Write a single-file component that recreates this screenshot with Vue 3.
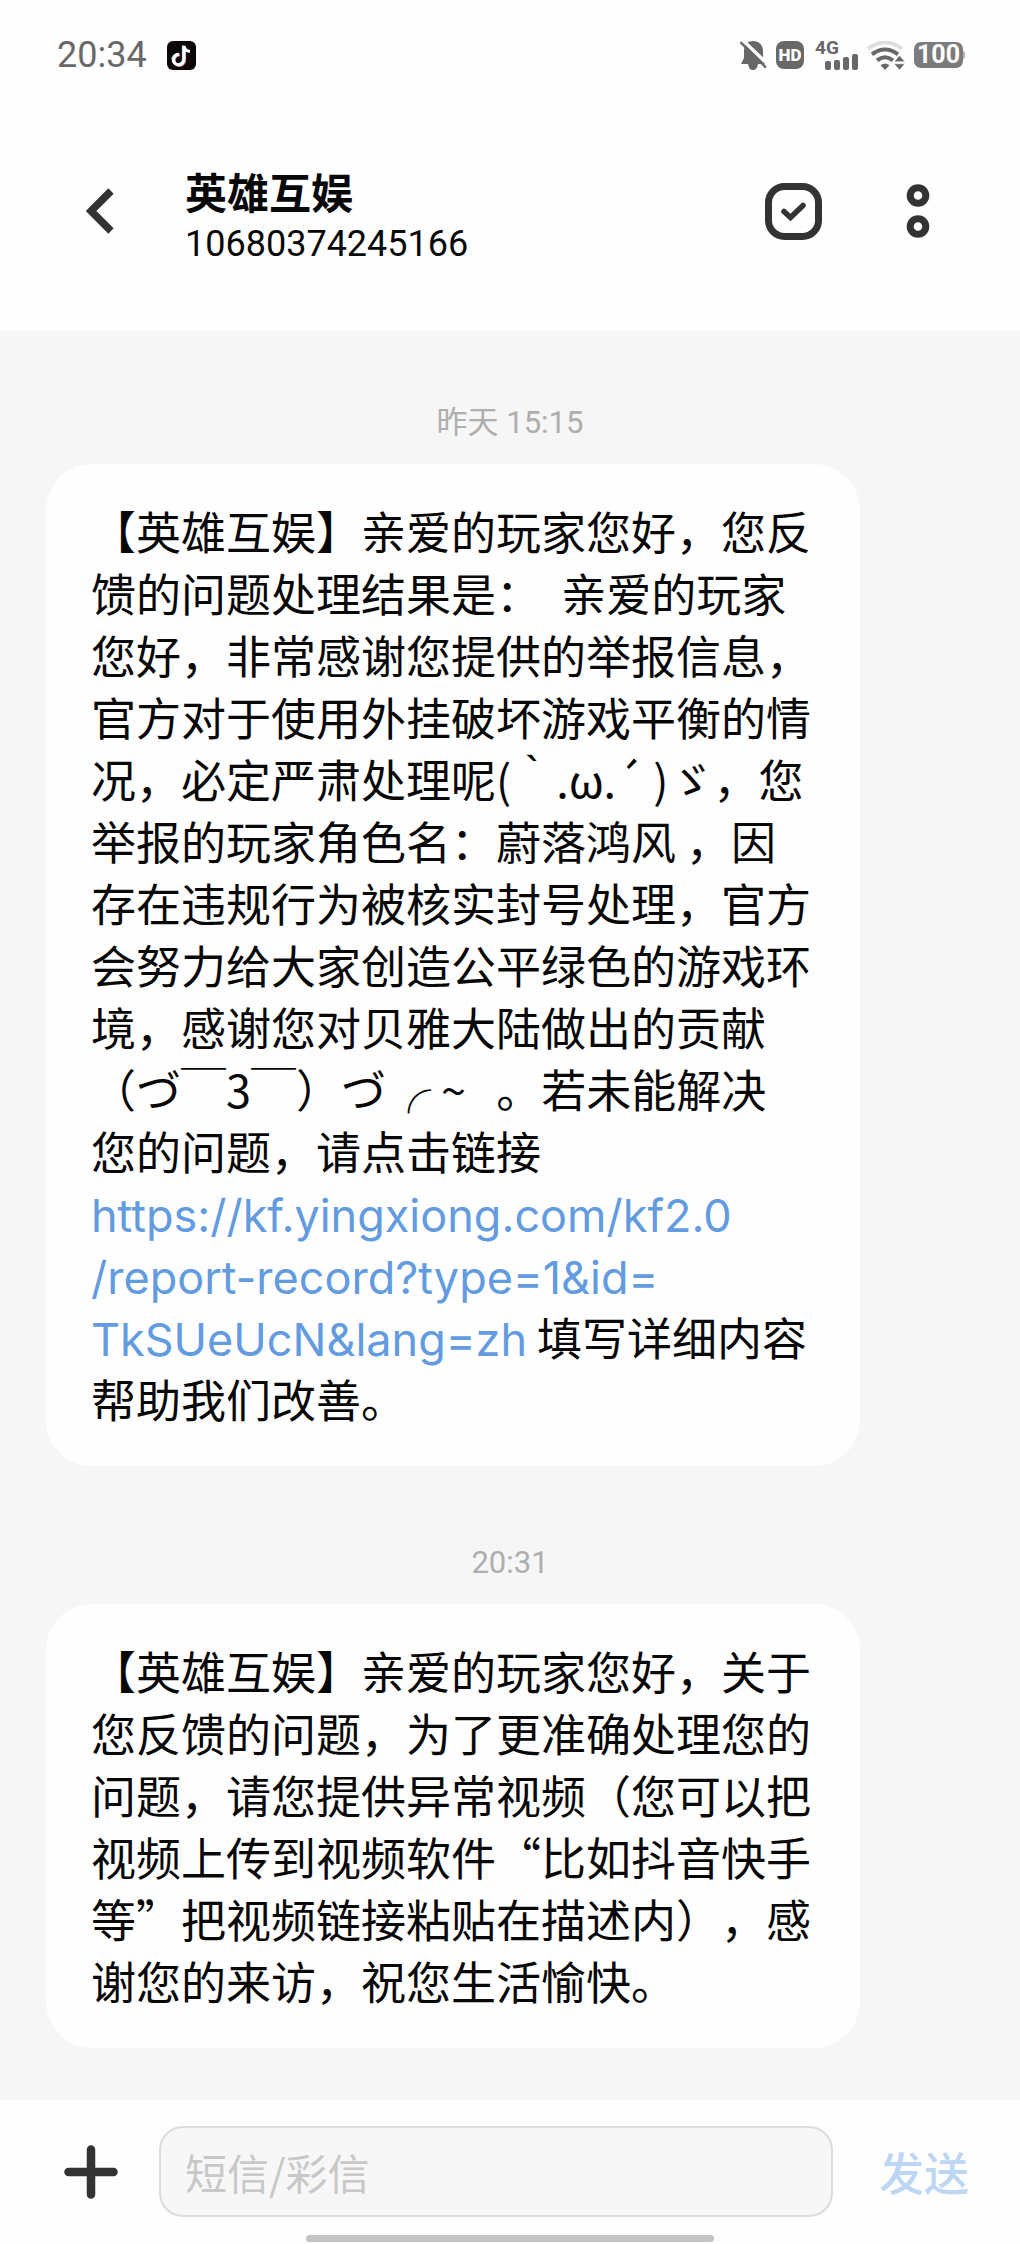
<template>
  <div class="phone">
    <!-- Status bar -->
    <div class="status-bar">
      <div class="status-left">
        <span class="clock">20:34</span>
        <svg class="app-icon" viewBox="0 0 29 29" aria-hidden="true">
          <rect width="29" height="29" rx="6" fill="#0b0709" />
          <path d="M12.2 13.6 a5.2 5.2 0 1 0 4.8 5.2 V5.5" fill="none" stroke="#f4566f" stroke-width="2.6" transform="translate(.8 .6)" />
          <path d="M12.2 13.6 a5.2 5.2 0 1 0 4.8 5.2 V5" fill="none" stroke="#8feaf0" stroke-width="2.6" transform="translate(-.8 -.5)" />
          <path d="M12.2 13.6 a5.2 5.2 0 1 0 4.8 5.2 V5 q.8 5 6 5.4" fill="none" stroke="#fff" stroke-width="3" />
        </svg>
      </div>
      <div class="status-right">
        <svg class="icon-bell" viewBox="0 0 27 29" aria-hidden="true">
          <path d="M13 0 C19 0 23 4 23 10 V17 L26 23 H1 L4 17 V10 C4 4 7 0 13 0 Z M8 23 H18 C17 27.5 15.5 29 13 29 S9 27.5 8 23 Z" fill="#686868" />
          <path d="M2 -1.5 L28 23.5" stroke="#fefefe" stroke-width="3.4" />
          <path d="M1.2 1.8 L25.2 25.8" stroke="#686868" stroke-width="2.4" stroke-linecap="round" />
        </svg>
        <span class="hd">HD</span>
        <span class="signal">
          <span class="network">4G</span>
          <svg class="bars" viewBox="0 0 34 16" aria-hidden="true">
            <g fill="#686868">
              <rect x="1" y="7" width="6" height="9" rx="2" />
              <rect x="10" y="6" width="6" height="10" rx="2" />
              <rect x="19" y="3" width="6" height="13" rx="2" />
              <rect x="28" y="0" width="6" height="16" rx="2" />
            </g>
          </svg>
        </span>
        <svg class="icon-wifi" viewBox="0 0 38 29" aria-hidden="true">
          <g fill="none" stroke-width="4">
            <path d="M1 7.6 Q18 -4.6 35 7.6" stroke="#dedede" />
            <path d="M5 13.4 Q18 3.6 31 13.4" stroke="#686868" />
            <path d="M10 19.4 Q18 13 26 19.4" stroke="#686868" />
          </g>
          <path d="M13.5 24.2 Q18 20.8 22.5 24.2 L18 29 Z" fill="#686868" />
          <path d="M27 20.8 L32.5 14.5 L38 20.8 Z M27 22.8 H38 L32.5 29 Z" fill="#686868" stroke="#fefefe" stroke-width=".6" />
        </svg>
        <span class="battery">100</span>
      </div>
    </div>

    <!-- Conversation header -->
    <header class="header">
      <button class="icon-button back" type="button" aria-label="返回">
        <svg width="28" height="46" viewBox="0 0 28 46">
          <path d="M25 3 L5 23 L25 43" fill="none" stroke="#333" stroke-width="7.5" />
        </svg>
      </button>
      <div class="contact">
        <h1 class="contact-name">英雄互娱</h1>
        <p class="contact-number">10680374245166</p>
      </div>
      <button class="icon-button select" type="button" aria-label="选择">
        <svg width="57" height="57" viewBox="0 0 57 57" fill="none" stroke="#333">
          <rect x="3.5" y="3.5" width="50" height="50" rx="16" stroke-width="7" />
          <path d="M19 28.5 L25.5 34.5 L38 22.5" stroke-width="5.5" stroke-linecap="round" />
        </svg>
      </button>
      <button class="icon-button more" type="button" aria-label="更多">
        <svg width="24" height="54" viewBox="0 0 24 54" fill="none" stroke="#333" stroke-width="7">
          <circle cx="12" cy="11.5" r="7.8" />
          <circle cx="12" cy="42.5" r="7.8" />
        </svg>
      </button>
    </header>

    <!-- Messages -->
    <main class="conversation">
      <section v-for="message in messages" :key="message.time" class="message">
        <time class="message-time">{{ message.time }}</time>
        <p class="bubble"><template v-for="(part, i) in message.parts" :key="i"><a v-if="part.href" class="link" :href="part.href">{{ part.text }}</a><template v-else>{{ part.text }}</template></template></p>
      </section>
    </main>

    <!-- Composer -->
    <footer class="footer">
      <form class="composer" @submit.prevent>
        <button class="icon-button add" type="button" aria-label="添加">
          <svg width="54" height="54" viewBox="0 0 54 54">
            <path d="M4.5 27 H49.5 M27 4.5 V49.5" stroke="#333" stroke-width="8.5" stroke-linecap="round" />
          </svg>
        </button>
        <input v-model="draft" class="draft" type="text" placeholder="短信/彩信" aria-label="短信/彩信" />
        <button class="send" type="submit">发送</button>
      </form>
      <div class="home-indicator"></div>
    </footer>
  </div>
</template>

<script setup>
import { ref } from 'vue'

const draft = ref('')

const messages = [
  {
    time: '昨天 15:15',
    parts: [
      {
        text: [
          '【英雄互娱】亲爱的玩家您好，您反',
          '馈的问题处理结果是：  亲爱的玩家',
          '您好，非常感谢您提供的举报信息，',
          '官方对于使用外挂破坏游戏平衡的情',
          '况，必定严肃处理呢(｀.ω.´ )ゞ，您',
          '举报的玩家角色名：蔚落鸿风 ，因',
          '存在违规行为被核实封号处理，官方',
          '会努力给大家创造公平绿色的游戏环',
          '境，感谢您对贝雅大陆做出的贡献',
          '（づ￣3￣）づ╭ ~   。若未能解决',
          '您的问题，请点击链接',
          ''
        ].join('\n')
      },
      {
        text: 'https://kf.yingxiong.com/kf2.0\n/report-record?type=1&id=\nTkSUeUcN&lang=zh',
        href: 'https://kf.yingxiong.com/kf2.0/report-record?type=1&id=TkSUeUcN&lang=zh'
      },
      { text: ' 填写详细内容\n帮助我们改善。' }
    ]
  },
  {
    time: '20:31',
    parts: [
      {
        text: [
          '【英雄互娱】亲爱的玩家您好，关于',
          '您反馈的问题，为了更准确处理您的',
          '问题，请您提供异常视频（您可以把',
          '视频上传到视频软件“比如抖音快手',
          '等”把视频链接粘贴在描述内），感',
          '谢您的来访，祝您生活愉快。'
        ].join('\n')
      }
    ]
  }
]
</script>

<style>
body {
  margin: 0;
  background: #f6f6f6;
}
</style>

<style scoped>
.phone {
  display: flex;
  flex-direction: column;
  min-height: 100vh;
  background: #f6f6f6;
  color: #080808;
  font-family: Roboto, "Noto Sans CJK SC", sans-serif;
}

button {
  padding: 0;
  border: 0;
  background: none;
  font: inherit;
  cursor: pointer;
}

.icon-button {
  display: flex;
  flex: none;
}

/* Status bar */
.status-bar {
  display: flex;
  align-items: center;
  justify-content: space-between;
  padding: 34px 57px 0;
  height: 42px;
  background: #fefefe;
  color: #686868;
}

.status-left {
  display: flex;
  align-items: center;
  gap: 20px;
}

.clock {
  font-size: 36px;
  line-height: 42px;
}

.app-icon {
  width: 29px;
  height: 29px;
}

.status-right {
  display: flex;
  align-items: center;
  gap: 9px;
}

.icon-bell {
  width: 27px;
  height: 29px;
}

.hd {
  width: 28px;
  border-radius: 8px;
  background: #686868;
  color: #fefefe;
  font-size: 17px;
  font-weight: 900;
  line-height: 28px;
  text-align: center;
}

.signal {
  display: flex;
  flex-direction: column;
  width: 43px;
  height: 29px;
  margin-left: 2px;
}

.network {
  height: 13px;
  font-size: 19px;
  font-weight: 700;
  line-height: 14px;
}

.bars {
  align-self: flex-end;
  width: 34px;
  height: 16px;
}

.icon-wifi {
  width: 38px;
  height: 29px;
}

.battery {
  position: relative;
  width: 49px;
  border-radius: 7px;
  background: #7b7b7b;
  color: #fefefe;
  font-size: 25px;
  font-weight: 700;
  line-height: 26px;
  text-align: center;
}

.battery::after {
  content: "";
  position: absolute;
  top: 9px;
  right: -2px;
  width: 2px;
  height: 8px;
  border-radius: 0 2px 2px 0;
  background: #b5b5b5;
}

/* Header */
.header {
  display: flex;
  align-items: center;
  padding: 78px 90px 63px 86px;
  background: #fefefe;
}

.contact {
  flex: 1;
  margin-left: 71px;
  padding-top: 16px;
}

.contact-name {
  margin: 0;
  font-size: 42px;
  font-weight: 700;
  line-height: 50px;
}

.contact-number {
  margin: 0;
  font-size: 36px;
  line-height: 48px;
}

.more {
  margin-left: 84px;
}

/* Messages */
.conversation {
  flex: 1;
  padding: 70px 160px 52px 46px;
}

.message + .message {
  margin-top: 75px;
}

.message-time {
  display: block;
  margin-right: -114px;
  padding-bottom: 19px;
  color: #aeaeae;
  font-size: 31px;
  line-height: 44px;
  text-align: center;
}

.bubble {
  margin: 0;
  padding: 36px 0 36px 45px;
  border-radius: 46px;
  background: #fefefe;
  font-family: "Noto Sans CJK SC", sans-serif;
  font-size: 45px;
  line-height: 62px;
  white-space: pre-wrap;
  text-spacing-trim: space-all;
}

.link {
  color: #629bdf;
  font-family: Inter, sans-serif;
  line-height: 50px;
  text-decoration: none;
}

/* Composer */
.footer {
  padding: 26px 0 3px;
  background: #fefefe;
}

.composer {
  display: flex;
  align-items: center;
  padding: 0 51px 0 64px;
}

.draft {
  flex: 1;
  min-width: 0;
  box-sizing: border-box;
  height: 91px;
  margin: 0 46px 0 41px;
  padding: 0 24px;
  border: 2px solid #dcdcdc;
  border-radius: 24px;
  outline: none;
  background: #f7f7f7;
  color: #080808;
  font-family: "Noto Sans CJK SC", sans-serif;
  font-size: 42px;
}

.draft::placeholder {
  color: #c8c8c8;
  opacity: 1;
}

.send {
  color: #bcd6f4;
  font-family: "Noto Sans CJK SC", sans-serif;
  font-size: 45px;
  font-weight: 500;
  line-height: 62px;
}

.home-indicator {
  width: 40%;
  height: 7px;
  margin: 18px auto 0;
  border-radius: 4px;
  background: #c3c3c3;
}
</style>
